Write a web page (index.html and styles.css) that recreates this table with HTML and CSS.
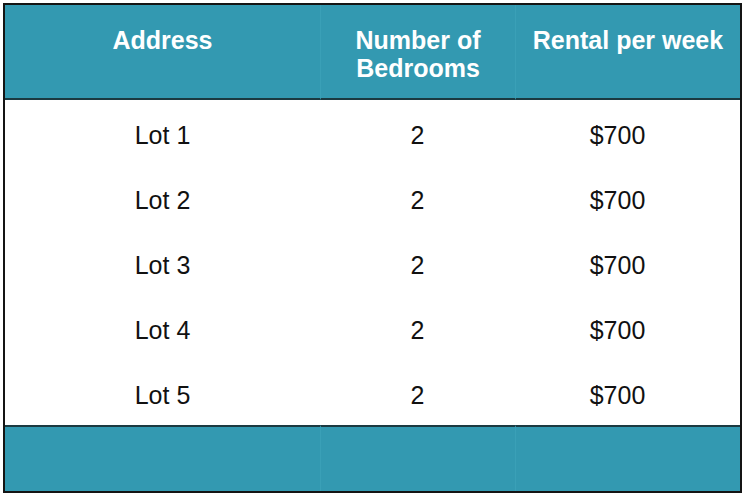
FILE: index.html
```html
<!DOCTYPE html>
<html>
<head>
<meta charset="utf-8">
<link rel="stylesheet" href="styles.css">
</head>
<body>
<table class="rent">
  <colgroup>
    <col class="c1"><col class="c2"><col class="c3">
  </colgroup>
  <thead>
    <tr class="head">
      <th>Address</th>
      <th>Number of<br>Bedrooms</th>
      <th>Rental per week</th>
    </tr>
  </thead>
  <tbody>
    <tr><td>Lot 1</td><td>2</td><td class="price">$700</td></tr>
    <tr><td>Lot 2</td><td>2</td><td class="price">$700</td></tr>
    <tr><td>Lot 3</td><td>2</td><td class="price">$700</td></tr>
    <tr><td>Lot 4</td><td>2</td><td class="price">$700</td></tr>
    <tr><td>Lot 5</td><td>2</td><td class="price">$700</td></tr>
  </tbody>
  <tfoot>
    <tr class="foot"><td></td><td></td><td></td></tr>
  </tfoot>
</table>
</body>
</html>
```

FILE: styles.css
```css
html, body {
  margin: 0;
  padding: 0;
  background: #ffffff;
}
body {
  padding: 3px;
  font-family: "Liberation Sans", Arial, sans-serif;
}
.rent {
  border-collapse: separate;
  border-spacing: 0;
  table-layout: fixed;
  width: 739px;
  border: 2px solid #141414;
}
.c1 { width: 315px; }
.c2 { width: 195px; }
.c3 { width: 225px; }

.head th {
  background: #3399b1;
  color: #ffffff;
  font-weight: bold;
  font-size: 25px;
  line-height: 28px;
  height: 95px;
  box-sizing: border-box;
  padding: 21px 0 0;
  vertical-align: top;
  text-align: center;
  border-bottom: 2px solid #1b3a41;
}
.head th + th,
.foot td + td {
  border-left: 1px solid #3aa0b7;
}
tbody td {
  height: 65px;
  padding: 6px 0 0;
  box-sizing: border-box;
  text-align: center;
  vertical-align: middle;
  font-size: 25px;
  color: #111111;
  background: #ffffff;
}
tbody td.price {
  padding-right: 20px;
}
.foot td {
  background: #3399b1;
  height: 66px;
  box-sizing: border-box;
  border-top: 2px solid #1b3a41;
  padding: 0;
}
```
